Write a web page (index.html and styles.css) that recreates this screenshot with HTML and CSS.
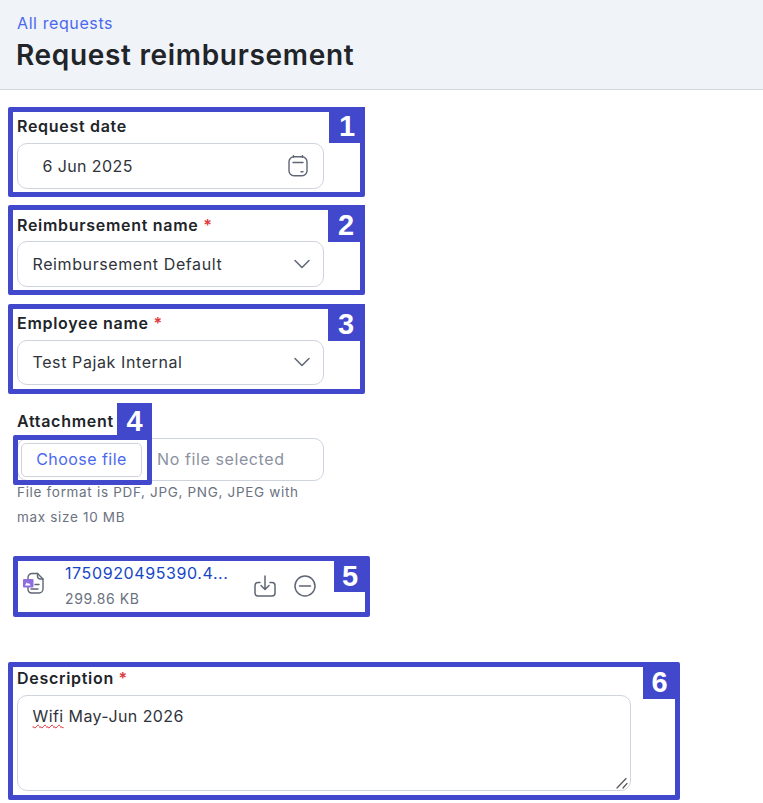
FILE: index.html
```html
<!DOCTYPE html>
<html lang="en">
<head>
<meta charset="utf-8">
<title>Request reimbursement</title>
<link rel="stylesheet" href="styles.css">
</head>
<body>
<header class="page-header">
  <a class="back-link" href="#">All requests</a>
  <h1 class="page-title">Request reimbursement</h1>
</header>
<main class="form">
  <section class="field field-date">
    <label class="label">Request date</label>
    <div class="control date-control">
      <span class="value">6 Jun 2025</span>
      <svg class="icon-cal" width="22" height="22" viewBox="0 0 22 22" fill="none" stroke="#5f6675" stroke-width="1.4" stroke-linecap="round"><rect x="2" y="1.800" width="18" height="19" rx="5"/><path d="M6.500 .6v1.600M15.500 .6v1.600M6 7.500h10M14 16.700h2"/></svg>
    </div>
  </section>
  <section class="field field-name">
    <label class="label">Reimbursement name <span class="req">*</span></label>
    <div class="control select-control">
      <span class="value">Reimbursement Default</span>
      <svg class="chev" width="18" height="10" viewBox="0 0 18 10" fill="none" stroke="#5f6675" stroke-width="1.5" stroke-linecap="round" stroke-linejoin="round"><path d="M2 1.5l7 7 7-7"/></svg>
    </div>
  </section>
  <section class="field field-emp">
    <label class="label">Employee name <span class="req">*</span></label>
    <div class="control select-control">
      <span class="value">Test Pajak Internal</span>
      <svg class="chev" width="18" height="10" viewBox="0 0 18 10" fill="none" stroke="#5f6675" stroke-width="1.5" stroke-linecap="round" stroke-linejoin="round"><path d="M2 1.5l7 7 7-7"/></svg>
    </div>
  </section>
  <section class="field field-att">
    <label class="label">Attachment</label>
    <div class="control file-control">
      <button class="choose" type="button">Choose file</button>
      <span class="nofile">No file selected</span>
    </div>
    <p class="hint">File format is PDF, JPG, PNG, JPEG with<br>max size 10 MB</p>
  </section>
  <section class="file-item">
    <svg class="file-icon" width="24" height="24" viewBox="0 0 24 24" fill="none">
      <path d="M6 8V6.500A4 4 0 0 1 10 2.500h5.500L21 8v10a4 4 0 0 1-4 4H9.500A3.500 3.500 0 0 1 6 18.500V16" stroke="#5f6675" stroke-width="1.400"/>
      <path d="M15.500 2.500V5a3 3 0 0 0 3 3H21M13 13.500h4M9 18h7" stroke="#5f6675" stroke-width="1.400" stroke-linecap="round"/>
      <rect x="1" y="8" width="10.500" height="8.500" rx="1" fill="#8f6fe0"/>
      <path d="M3 14.500l1.800-3.200 1.200 1.800.9-1 1.800 2.400z" fill="#fff"/>
    </svg>
    <div class="file-text">
      <a class="file-name" href="#">1750920495390.4...</a>
      <span class="file-size">299.86 KB</span>
    </div>
    <div class="file-actions">
      <svg width="24" height="24" viewBox="0 0 24 24" fill="none" stroke="#5f6675" stroke-width="1.500" stroke-linecap="round" stroke-linejoin="round"><path d="M7 8.500H5A3 3 0 0 0 2 11.500v7.500a3 3 0 0 0 3 3h14a3 3 0 0 0 3-3v-7.500a3 3 0 0 0-3-3h-2"/><path d="M12 2v13M8 11.500l4 4 4-4"/></svg>
      <svg width="24" height="24" viewBox="0 0 24 24" fill="none" stroke="#5f6675" stroke-width="1.500" stroke-linecap="round"><circle cx="12" cy="12" r="10"/><path d="M6.500 12h11"/></svg>
    </div>
  </section>
  <section class="field field-desc">
    <label class="label">Description <span class="req">*</span></label>
    <div class="control textarea-control">
      <span class="value"><span class="misspelt">Wifi</span> May-Jun 2026</span>
      <svg class="grip" width="12" height="12" viewBox="0 0 12 12" stroke="#555" stroke-width="1.200" stroke-linecap="round"><path d="M1 11L10 1.500M7 11l4-4.500"/></svg>
    </div>
  </section>
</main>
<div class="mark mark-1"><span class="badge">1</span></div>
<div class="mark mark-2"><span class="badge">2</span></div>
<div class="mark mark-3"><span class="badge">3</span></div>
<div class="mark mark-4"><span class="badge">4</span></div>
<div class="mark mark-5"><span class="badge">5</span></div>
<div class="mark mark-6"><span class="badge">6</span></div>
</body>
</html>
```
FILE: styles.css
```css
* { box-sizing: border-box; }
html, body { margin: 0; padding: 0; }
body {
  position: relative;
  height: 803px;
  overflow: hidden;
  background: #fff;
  font-family: Inter, "Liberation Sans", sans-serif;
  letter-spacing: 0.6px;
  color: #212429;
}
.page-header {
  height: 90px;
  padding: 13px 16px 0 17px;
  background: #f0f3f8;
  border-bottom: 1px solid #d3d6dd;
}
.back-link {
  display: block;
  font-size: 16px;
  line-height: 20px;
  color: #4a69ee;
  text-decoration: none;
}
.page-title {
  margin: 2px 0 0 -1px;
  font-size: 28px;
  line-height: 40px;
  font-weight: 600;
  letter-spacing: 0.68px;
  color: #212429;
}
.form { padding: 25px 0 0 17px; }
.field { width: 307px; margin-bottom: 25px; }
.label {
  display: block;
  font-size: 16px;
  line-height: 22px;
  font-weight: 600;
  letter-spacing: 0.7px;
  color: #212429;
  margin-bottom: 6px;
}
.req { color: #e0393e; }
.control {
  display: flex;
  align-items: center;
  justify-content: space-between;
  height: 46px;
  border: 1px solid #cfd3de;
  border-radius: 10px;
  background: #fff;
  font-size: 16px;
  color: #2f333b;
}
.date-control { padding: 0 14px 0 24.500px; letter-spacing: 0.4px; }
.select-control { padding: 0 12px 0 14.500px; }
.field-name .label { margin-bottom: 5px; }
.field-emp .control { height: 45px; padding-bottom: 1px; }
.field-att { margin-bottom: 0; }
.file-control {
  height: 43px;
  justify-content: flex-start;
  padding: 0 3px;
  gap: 15px;
}
.choose {
  height: 34px;
  width: 121px;
  border: 1px solid #cfd3de;
  border-radius: 5px;
  background: #fff;
  font: 16px Inter, "Liberation Sans", sans-serif;
  letter-spacing: 0.45px;
  color: #4a69ee;
  padding: 0 0 2px;
}
.nofile { font-size: 16px; color: #8b91a1; margin-bottom: 2px; }
.hint {
  margin: -1px 0 0;
  font-size: 13.500px;
  line-height: 25px;
  letter-spacing: 0.68px;
  color: #6b7280;
  width: 307px;
}
.file-item {
  display: flex;
  align-items: center;
  width: 332px;
  height: 50px;
  margin: 30px 0 0 0;
  padding-left: 5px;
}
.file-icon { flex: none; margin-bottom: 4px; }
.file-text {
  display: flex;
  flex-direction: column;
  gap: 5px;
  margin-left: 19px;
  width: 188px;
}
.file-name {
  font-size: 16px;
  line-height: 21px;
  color: #1546c8;
  text-decoration: none;
}
.file-size { font-size: 14px; line-height: 19px; color: #6b7280; }
.file-actions { display: flex; gap: 16px; margin-top: 1px; }
.field-desc { width: 614px; margin: 57px 0 0; }
.textarea-control {
  position: relative;
  height: 96px;
  align-items: flex-start;
  padding: 9px 14.500px;
  line-height: 22px;
  letter-spacing: 0.42px;
}
.misspelt { text-decoration: underline wavy #e3242b 1.300px; text-underline-offset: 2px; }
.grip { position: absolute; right: 2px; bottom: 1px; }
.mark {
  position: absolute;
  border: 5px solid #4148cc;
  border-radius: 2px;
  pointer-events: none;
}
.badge {
  position: absolute;
  display: flex;
  align-items: center;
  justify-content: center;
  background: #4148cc;
  color: #fff;
  font: 700 29px/1 "Liberation Sans", Arial, sans-serif;
  letter-spacing: 0;
}
.mark-1 { left: 8px; top: 107px; width: 357px; height: 90px; }
.mark-1 .badge { right: -5px; top: -5px; width: 36px; height: 36px; padding-top: 3px; }
.mark-2 { left: 8px; top: 205px; width: 357px; height: 90px; }
.mark-2 .badge { right: -5px; top: -5px; width: 37px; height: 37px; padding: 3px 1px 0 0; }
.mark-3 { left: 8px; top: 304px; width: 357px; height: 90px; }
.mark-3 .badge { right: -5px; top: -5px; width: 37px; height: 37px; padding: 3px 1px 0 0; }
.mark-4 { left: 13px; top: 435px; width: 139px; height: 50px; }
.mark-4 .badge { right: -5px; top: -37px; width: 35px; height: 37px; }
.mark-5 { left: 13px; top: 556px; width: 357px; height: 61px; }
.mark-5 .badge { right: -1px; top: -1px; width: 32px; height: 32px; padding: 0; }
.mark-6 { left: 8px; top: 662px; width: 672px; height: 138px; }
.mark-6 .badge { right: -1px; top: -1px; width: 33px; height: 33px; }
```
